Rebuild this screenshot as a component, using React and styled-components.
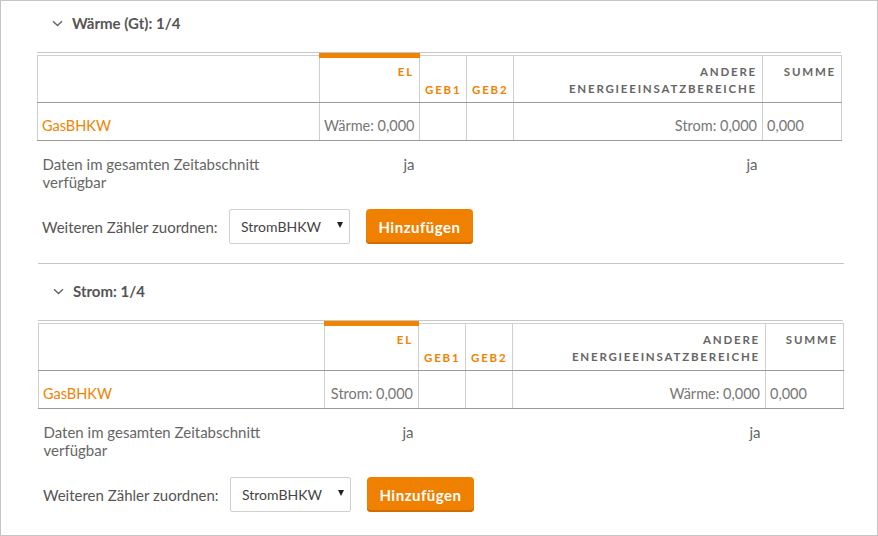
import React from 'react';
import styled, { createGlobalStyle } from 'styled-components';

const Global = createGlobalStyle`
  body {
    margin: 0;
    font-family: "Lato", "Open Sans", sans-serif;
    color: #666;
  }
`;

const Frame = styled.div`
  width: 878px;
  height: 536px;
  box-sizing: border-box;
  border: 1px solid #c4c4c4;
  overflow: hidden;
`;

const Section = styled.section`
  padding: 0 ${p => p.$right}px 0 ${p => p.$left}px;
`;

const Header = styled.div`
  height: 44px;
  margin-bottom: 7px;
  display: flex;
  align-items: center;
  gap: 9px;
  padding-left: 15px;
  font-size: 15px;
  font-weight: 700;
  color: #555;
`;

const Divider = styled.hr`
  margin: 19px 33px 5px 37px;
  border: 0;
  border-top: 1px solid #c4c4c4;
`;

const TableWrap = styled.div`
  border-top: 1px solid #c8c8c8;
  padding-top: 2px;
`;

const Table = styled.table`
  width: 100%;
  border-collapse: collapse;
  table-layout: fixed;
  font-size: 15px;
`;

const Th = styled.th`
  position: relative;
  padding: 7px 5px 4px;
  height: 35px;
  text-align: right;
  vertical-align: ${p => (p.$low ? 'bottom' : 'top')};
  font-size: 11.5px;
  line-height: 17px;
  font-weight: 700;
  letter-spacing: 1.8px;
  text-transform: uppercase;
  color: ${p => (p.$accent ? '#f08300' : '#666')};
  border: 1px solid #cfcfcf;
  border-bottom: 1px solid #9a9a9a;

  ${p =>
    p.$active &&
    `&::before {
      content: '';
      position: absolute;
      left: -1px;
      right: -1px;
      top: -3px;
      height: 5px;
      background: #f08300;
    }`}
`;

const Td = styled.td`
  padding: 13px 5px 4px 4px;
  font-size: 14.5px;
  line-height: 20px;
  white-space: nowrap;
  text-align: ${p => (p.$right ? 'right' : 'left')};
  color: ${p => (p.$accent ? '#f08300' : '#777')};
  border: 1px solid #cfcfcf;
  border-bottom: 1px solid #9a9a9a;
  border-top: 0;
`;

const InfoCell = styled.td`
  padding: 14px 5px 0;
  vertical-align: top;
  line-height: 18px;
  color: #666;
  text-align: ${p => (p.$right ? 'right' : 'left')};
`;

const AddRow = styled.div`
  display: flex;
  align-items: center;
  margin-top: 18px;
  padding-left: 5px;
  font-size: 15px;
  color: #555;
`;

const Label = styled.span`
  width: 187px;
`;

const SelectBox = styled.div`
  position: relative;
  box-sizing: border-box;
  width: 121px;
  height: 35px;
  display: flex;
  align-items: center;
  padding-left: 11px;
  border: 1px solid #d0d0d0;
  border-radius: 2px;
  background: #fff;
  color: #444;
  font-size: 14px;
`;

const Caret = styled.span`
  position: absolute;
  right: 6px;
  top: 12px;
  width: 0;
  height: 0;
  border-left: 3.5px solid transparent;
  border-right: 3.5px solid transparent;
  border-top: 6px solid #222;
`;

const AddButton = styled.button`
  margin-left: 16px;
  box-sizing: border-box;
  width: 107px;
  height: 35px;
  border: 0;
  border-radius: 4px;
  background: #f08000;
  box-shadow: inset 0 -2px 0 #cf6d00;
  color: #fff;
  font-family: inherit;
  font-size: 15px;
  font-weight: 700;
  letter-spacing: 0.5px;
`;

function Chevron() {
  return (
    <svg width="11" height="7" viewBox="0 0 11 7">
      <path d="M1 1.3 L5.5 5.5 L10 1.3" fill="none" stroke="#666" strokeWidth="1.5" />
    </svg>
  );
}

function MeterSection({ title, left, right, cols, elValue, otherValue }) {
  return (
    <Section $left={left} $right={right}>
      <Header>
        <Chevron />
        {title}
      </Header>
      <TableWrap>
        <Table>
          <colgroup>
            {cols.map((w, i) => (
              <col key={i} style={{ width: w }} />
            ))}
          </colgroup>
          <thead>
            <tr>
              <Th />
              <Th $accent $active>EL</Th>
              <Th $accent $low>GEB1</Th>
              <Th $accent $low>GEB2</Th>
              <Th>Andere Energieeinsatzbereiche</Th>
              <Th>Summe</Th>
            </tr>
          </thead>
          <tbody>
            <tr>
              <Td $accent>GasBHKW</Td>
              <Td $right>{elValue}</Td>
              <Td />
              <Td />
              <Td $right>{otherValue}</Td>
              <Td>0,000</Td>
            </tr>
            <tr>
              <InfoCell>Daten im gesamten Zeitabschnitt verfügbar</InfoCell>
              <InfoCell $right>ja</InfoCell>
              <InfoCell />
              <InfoCell />
              <InfoCell $right>ja</InfoCell>
              <InfoCell />
            </tr>
          </tbody>
        </Table>
      </TableWrap>
      <AddRow>
        <Label>Weiteren Zähler zuordnen:</Label>
        <SelectBox>
          StromBHKW
          <Caret />
        </SelectBox>
        <AddButton>Hinzufügen</AddButton>
      </AddRow>
    </Section>
  );
}

export default function App() {
  return (
    <>
      <Global />
      <Frame>
        <MeterSection
          title="Wärme (Gt): 1/4"
          left={36}
          right={36}
          cols={[282, 100, 47, 47, 249, 79]}
          elValue="Wärme: 0,000"
          otherValue="Strom: 0,000"
        />
        <Divider />
        <MeterSection
          title="Strom: 1/4"
          left={37}
          right={34}
          cols={[286, 94, 47, 47, 253, 78]}
          elValue="Strom: 0,000"
          otherValue="Wärme: 0,000"
        />
      </Frame>
    </>
  );
}
